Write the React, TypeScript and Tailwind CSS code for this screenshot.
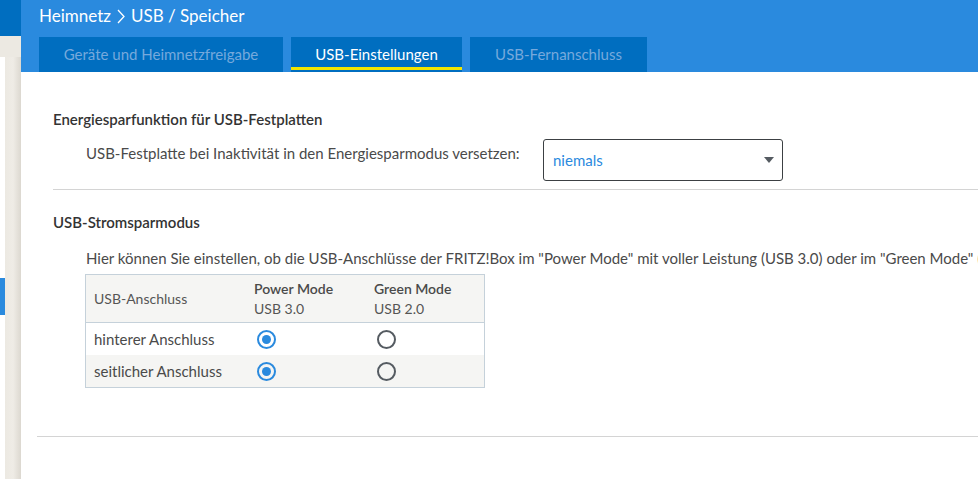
import React from "react";

const font = { fontFamily: '"Source Sans Pro", Lato, "Open Sans", sans-serif' };

function Radio({ checked }: { checked: boolean }) {
  if (checked) {
    return (
      <span className="flex h-[19px] w-[19px] items-center justify-center rounded-full border-2 border-[#2a8ade]">
        <span className="h-[9px] w-[9px] rounded-full bg-[#2a8ade]" />
      </span>
    );
  }
  return <span className="block h-[19px] w-[19px] rounded-full border-2 border-[#555b61]" />;
}

const tabs = [
  { label: "Geräte und Heimnetzfreigabe", w: "w-[244px]", active: false },
  { label: "USB-Einstellungen", w: "w-[171px]", active: true },
  { label: "USB-Fernanschluss", w: "w-[177px]", active: false },
];

const rows = [
  { name: "hinterer Anschluss", bg: "bg-white" },
  { name: "seitlicher Anschluss", bg: "bg-[#f5f5f3]" },
];

export default function App() {
  return (
    <div className="flex h-[479px] w-[978px] overflow-hidden bg-white" style={font}>
      {/* linker Rand: Menü-Kante */}
      <div className="flex w-[21px] shrink-0 flex-col">
        <div className="h-[36px] bg-[#006ec0]" />
        <div className="h-[21px] bg-[#ece9e2]" />
        <div className="flex flex-1">
          <div className="flex w-[5px] flex-col bg-white">
            <div className="h-[221px]" />
            <div className="h-[37px] bg-[#2a8ade]" />
          </div>
          <div className="flex-1 bg-gradient-to-r from-[#ece9e2] via-[#efece6] to-[#dcd8d0]" />
        </div>
      </div>

      <div className="flex min-w-0 flex-1 flex-col">
        <div className="h-[72px] bg-[#2a8ade] pl-[18px]">
          <div className="flex h-[32px] items-center text-[17px] text-white">
            Heimnetz
            <svg className="mx-[6px]" width="8" height="15" viewBox="0 0 8 15">
              <path d="M1 1l6 6.5L1 14" fill="none" stroke="white" strokeWidth="1.3" />
            </svg>
            USB / Speicher
          </div>
          <div className="mt-[5px] flex gap-2">
            {tabs.map((t) => (
              <div
                key={t.label}
                className={`relative flex h-[35px] items-center justify-center bg-[#006ec0] text-[15px] ${t.w} ${
                  t.active ? "text-white" : "text-[#76a9dc]"
                }`}
              >
                {t.label}
                {t.active && <span className="absolute bottom-[2px] left-0 right-0 h-[3px] bg-[#f2e500]" />}
              </div>
            ))}
          </div>
        </div>

        <div className="flex flex-1 flex-col pl-[16px]">
          <div className="pl-[16px] pt-[37px]">
            <div className="text-[15px] font-semibold leading-[20px] text-[#333]">
              Energiesparfunktion für USB-Festplatten
            </div>
            <div className="mt-[10px] flex pl-[33px]">
              <div className="w-[457px] pt-[4px] text-[15px] leading-[20px] text-[#4a4a4a]">
                USB-Festplatte bei Inaktivität in den Energiesparmodus versetzen:
              </div>
              <div className="flex h-[42px] w-[240px] items-center justify-between rounded-[3px] border border-[#3c4043] pl-[9px] pr-[8px]">
                <span className="text-[15px] text-[#2a8ade]">niemals</span>
                <svg width="10" height="6" viewBox="0 0 10 6">
                  <path d="M0 0h10L5 6z" fill="#555b61" />
                </svg>
              </div>
            </div>
            <div className="mt-[8px] h-px bg-[#d4d4d4]" />

            <div className="mt-[22px] text-[15px] font-semibold leading-[20px] text-[#333]">USB-Stromsparmodus</div>
            <div className="mt-[16px] whitespace-nowrap pl-[33px] text-[15px] leading-[20px] text-[#4a4a4a]">
              Hier können Sie einstellen, ob die USB-Anschlüsse der FRITZ!Box im "Power Mode" mit voller Leistung (USB 3.0)
              oder im "Green Mode" (USB 2.0) betrieben werden.
            </div>
            <div className="ml-[32px] mt-[6px] w-[400px] border border-[#c5d1da] text-[15px] text-[#4a4a4a]">
              <div className="flex h-[48px] items-center border-b border-[#c5d1da] bg-[#f5f5f3]">
                <div className="w-[168px] pl-[8px] text-[14px] text-[#555]">USB-Anschluss</div>
                <div className="w-[120px] text-[14px] leading-[20px]">
                  <div className="font-semibold text-[#4a4a4a]">Power Mode</div>
                  <div className="text-[#555]">USB 3.0</div>
                </div>
                <div className="text-[14px] leading-[20px]">
                  <div className="font-semibold text-[#4a4a4a]">Green Mode</div>
                  <div className="text-[#555]">USB 2.0</div>
                </div>
              </div>
              {rows.map((r) => (
                <div key={r.name} className={`flex h-[32px] items-center ${r.bg}`}>
                  <div className="w-[168px] pl-[8px]">{r.name}</div>
                  <div className="w-[120px] pl-[3px]">
                    <Radio checked />
                  </div>
                  <div className="pl-[3px]">
                    <Radio checked={false} />
                  </div>
                </div>
              ))}
            </div>
          </div>
          <div className="mt-[48px] h-px bg-[#d4d4d4]" />
        </div>
      </div>
    </div>
  );
}
